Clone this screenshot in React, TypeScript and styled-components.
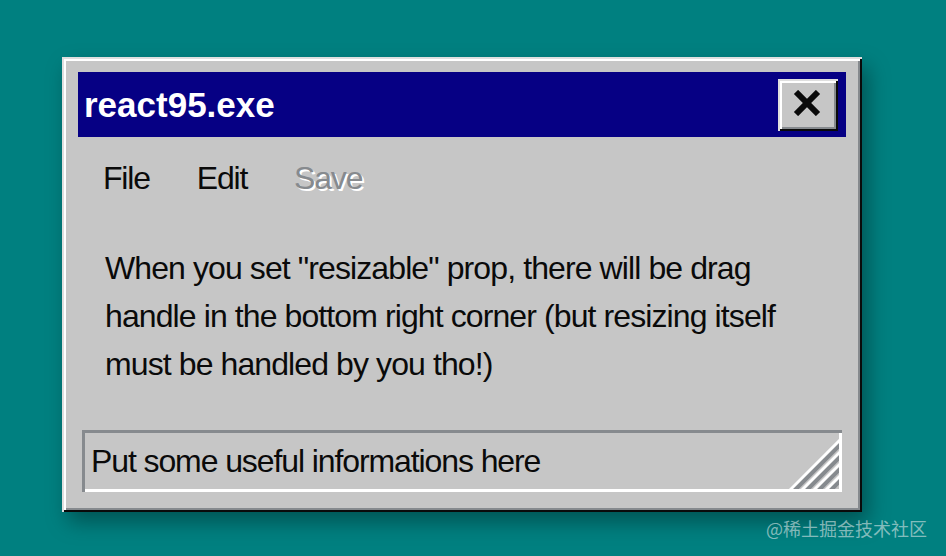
import React from 'react';
import styled, { createGlobalStyle } from 'styled-components';

const GlobalStyle = createGlobalStyle`
  html, body {
    margin: 0;
    padding: 0;
    background: #008080;
  }
  body {
    font-family: 'Liberation Sans', Arial, sans-serif;
    color: #0a0a0a;
  }
`;

const Desktop = styled.div`
  position: relative;
  box-sizing: border-box;
  height: 556px;
  padding: 57px 0 0 62px;
`;

const Window = styled.div`
  box-sizing: border-box;
  width: 800px;
  height: 455px;
  padding: 15px 16px 20px;
  display: flex;
  flex-direction: column;
  background: #c6c6c6;
  box-shadow:
    inset 2px 2px #dfdfdf,
    inset -2px -2px #0a0a0a,
    inset 4px 4px #ffffff,
    inset -4px -4px #868a8e,
    6px 10px 20px rgba(0, 0, 0, 0.35);
`;

const TitleBar = styled.div`
  height: 65px;
  flex-shrink: 0;
  display: flex;
  align-items: center;
  justify-content: space-between;
  padding: 0 8px 0 6px;
  background: #060084;
`;

const Title = styled.span`
  font-weight: bold;
  font-size: 35px;
  color: #ffffff;
`;

const CloseButton = styled.button`
  width: 60px;
  height: 52px;
  padding: 0 2px 3px 0;
  border: none;
  display: flex;
  align-items: center;
  justify-content: center;
  background: #c6c6c6;
  box-shadow:
    inset 2px 2px #dfdfdf,
    inset -2px -2px #0a0a0a,
    inset 4px 4px #ffffff,
    inset -4px -4px #868a8e;
`;

const MenuBar = styled.div`
  height: 82px;
  display: flex;
  align-items: center;
  gap: 47px;
  padding-left: 25px;
`;

const MenuItem = styled.span<{ $disabled?: boolean }>`
  font-size: 32px;
  letter-spacing: -1.2px;
  line-height: 48px;
  color: ${(p) => (p.$disabled ? '#868a8e' : '#0a0a0a')};
  text-shadow: ${(p) => (p.$disabled ? '2px 2px 0 #ffffff' : 'none')};
`;

const Content = styled.p`
  margin: 0;
  padding: 25px 0 0 27px;
  max-width: 690px;
  font-size: 32px;
  letter-spacing: -0.9px;
  line-height: 48px;
`;

const StatusBar = styled.div`
  position: relative;
  box-sizing: border-box;
  margin: auto 4px 0;
  height: 62px;
  padding-left: 9px;
  display: flex;
  align-items: center;
  font-size: 32px;
  letter-spacing: -1.1px;
  line-height: 48px;
  box-shadow:
    inset 3px 3px #868a8e,
    inset -3px -3px #ffffff;
`;

const ResizeHandle = styled.svg`
  position: absolute;
  right: 3px;
  bottom: 3px;
  width: 50px;
  height: 50px;
`;

const Watermark = styled.span`
  position: absolute;
  right: 19px;
  bottom: 15px;
  font-family: 'Noto Sans CJK SC', sans-serif;
  font-size: 18px;
  color: rgba(220, 230, 230, 0.6);
`;

const CloseIcon = () => (
  <svg width="28" height="26" viewBox="0 0 28 26">
    <path d="M3 2 L25 24 M25 2 L3 24" stroke="#0a0a0a" strokeWidth="6" />
  </svg>
);

const Handle = () => (
  <ResizeHandle viewBox="0 0 50 50">
    {[0, 12, 24, 36].map((d) => (
      <g key={d}>
        <line x1={d} y1={52} x2={52} y2={d} stroke="#ffffff" strokeWidth="3" />
        <line x1={d + 5} y1={52} x2={52} y2={d + 5} stroke="#868a8e" strokeWidth="4" />
      </g>
    ))}
  </ResizeHandle>
);

export default function App() {
  return (
    <>
      <GlobalStyle />
      <Desktop>
        <Window>
          <TitleBar>
            <Title>react95.exe</Title>
            <CloseButton aria-label="close">
              <CloseIcon />
            </CloseButton>
          </TitleBar>
          <MenuBar>
            <MenuItem>File</MenuItem>
            <MenuItem>Edit</MenuItem>
            <MenuItem $disabled>Save</MenuItem>
          </MenuBar>
          <Content>
            When you set "resizable" prop, there will be drag handle in the bottom right
            corner (but resizing itself must be handled by you tho!)
          </Content>
          <StatusBar>
            Put some useful informations here
            <Handle />
          </StatusBar>
        </Window>
        <Watermark>@稀土掘金技术社区</Watermark>
      </Desktop>
    </>
  );
}
